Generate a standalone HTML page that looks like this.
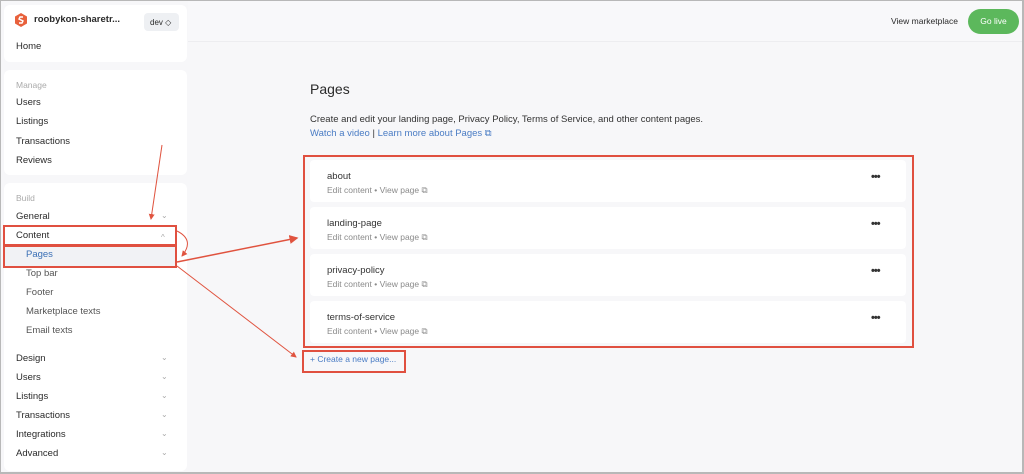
<!DOCTYPE html>
<html><head><style>
*{box-sizing:border-box;margin:0;padding:0}
body{width:1024px;height:474px;overflow:hidden;background:#f7f7f9;font-family:"Liberation Sans",sans-serif;color:#2a2a2a;position:relative}
.frame{position:absolute;inset:0;border:1px solid #b8b8b8;border-right:2px solid #b8b8b8;border-bottom:2px solid #b8b8b8;z-index:5;pointer-events:none}
.card{position:absolute;left:4px;width:183px;background:#fff;border-radius:6px}
.t{position:absolute;font-size:9.5px;white-space:nowrap;line-height:1}
.sub{color:#555}
.chev{position:absolute;left:161px;font-size:8px;color:#aaa}
.row{position:absolute;left:310px;width:596px;height:42px;background:#fff;border-radius:4px}
.row .n{position:absolute;left:17px;top:11px;font-size:9.5px;color:#333}
.row .s{position:absolute;left:17px;top:25px;font-size:8.5px;color:#8a8a8a}
.row .d{position:absolute;left:561px;top:11px;font-size:11px;font-weight:bold;color:#333;letter-spacing:-1px}
.red{position:absolute;border:2px solid #e05040;border-color:#e05040}
</style></head><body>
<div class="frame"></div>
<div style="position:absolute;left:188px;top:0;right:0;height:42px;background:#f8f8fa;border-bottom:1px solid #ededf0"></div>
<div class="card" style="top:5px;height:57px"></div>
<div class="card" style="top:70px;height:105px"></div>
<div class="card" style="top:183px;height:288px"></div>
<svg style="position:absolute;left:15px;top:13px" width="12" height="14" viewBox="0 0 12 14"><path d="M6 0L12 3.5V10.5L6 14L0 10.5V3.5Z" fill="#e8613c"/><path d="M8 4H5L4 6L8 8L7 10H4" stroke="#fff" stroke-width="1.4" fill="none"/></svg>
<div class="t" style="left:34px;top:15px;font-weight:bold;font-size:9.5px">roobykon-sharetr...</div>
<div style="position:absolute;left:144px;top:13px;width:35px;height:18px;background:#eef0f3;border-radius:4px;font-size:8px;padding:5px 0 0 6px">dev ◇</div>
<div class="t" style="left:16px;top:42px">Home</div>
<div class="t" style="left:16px;top:81px;color:#aaa;font-size:8.5px">Manage</div>
<div class="t" style="left:16px;top:98px">Users</div>
<div class="t" style="left:16px;top:117px">Listings</div>
<div class="t" style="left:16px;top:137px">Transactions</div>
<div class="t" style="left:16px;top:156px">Reviews</div>
<div class="t" style="left:16px;top:194px;color:#aaa;font-size:8.5px">Build</div>
<div class="t" style="left:16px;top:212px">General</div><div class="chev" style="top:211px">⌄</div>
<div style="position:absolute;left:4px;top:245px;width:172px;height:23px;background:#f1f2f5"></div>
<div class="t" style="left:16px;top:231px">Content</div><div class="chev" style="top:233px">^</div>
<div class="t" style="left:26px;top:250px;color:#3a6fb5">Pages</div>
<div class="t sub" style="left:26px;top:269px">Top bar</div>
<div class="t sub" style="left:26px;top:288px">Footer</div>
<div class="t sub" style="left:26px;top:307px">Marketplace texts</div>
<div class="t sub" style="left:26px;top:326px">Email texts</div>
<div class="t" style="left:16px;top:354px">Design</div><div class="chev" style="top:353px">⌄</div>
<div class="t" style="left:16px;top:373px">Users</div><div class="chev" style="top:372px">⌄</div>
<div class="t" style="left:16px;top:392px">Listings</div><div class="chev" style="top:391px">⌄</div>
<div class="t" style="left:16px;top:411px">Transactions</div><div class="chev" style="top:410px">⌄</div>
<div class="t" style="left:16px;top:430px">Integrations</div><div class="chev" style="top:429px">⌄</div>
<div class="t" style="left:16px;top:449px">Advanced</div><div class="chev" style="top:448px">⌄</div>
<div class="red" style="left:3px;top:225px;width:174px;height:21px"></div>
<div class="red" style="left:3px;top:245px;width:174px;height:23px"></div>

<div class="t" style="left:891px;top:17px;font-size:8.5px">View marketplace</div>
<div style="position:absolute;left:968px;top:9px;width:51px;height:25px;background:#5cb85c;border-radius:13px;color:#fff;font-size:8.5px;text-align:center;line-height:25px">Go live</div>

<div class="t" style="left:310px;top:82px;font-size:14px">Pages</div>
<div class="t" style="left:310px;top:115px;font-size:9.5px;color:#333">Create and edit your landing page, Privacy Policy, Terms of Service, and other content pages.</div>
<div class="t" style="left:310px;top:129px;font-size:9.5px;color:#4a7cc4">Watch a video <span style="color:#333">|</span> Learn more about Pages ⧉</div>

<div class="row" style="top:160px"><div class="n">about</div><div class="s">Edit content • View page ⧉</div><div class="d">•••</div></div>
<div class="row" style="top:207px"><div class="n">landing-page</div><div class="s">Edit content • View page ⧉</div><div class="d">•••</div></div>
<div class="row" style="top:254px"><div class="n">privacy-policy</div><div class="s">Edit content • View page ⧉</div><div class="d">•••</div></div>
<div class="row" style="top:301px"><div class="n">terms-of-service</div><div class="s">Edit content • View page ⧉</div><div class="d">•••</div></div>
<div class="red" style="left:303px;top:155px;width:611px;height:193px"></div>
<div class="t" style="left:310px;top:355px;font-size:8.5px;color:#4a7cc4">+ Create a new page...</div>
<div class="red" style="left:302px;top:350px;width:104px;height:23px"></div>

<svg style="position:absolute;left:0;top:0" width="1024" height="474">
<defs><marker id="a" markerWidth="6" markerHeight="6" refX="5" refY="3" orient="auto"><path d="M0 0L6 3L0 6Z" fill="#e0533f"/></marker></defs>
<g stroke="#e0533f" stroke-width="1" fill="none">
<path d="M162 145L151 219" marker-end="url(#a)"/>
<path d="M177 231Q195 240 182 256" marker-end="url(#a)"/>
<path d="M177 262L297 238" stroke-width="1.5" marker-end="url(#a)"/>
<path d="M177 266L296 357" marker-end="url(#a)"/>
</g></svg>
</body></html>
